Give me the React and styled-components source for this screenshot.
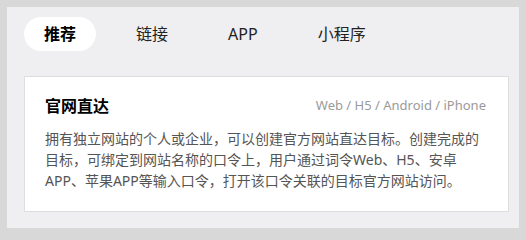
import React, { useState } from "react";
import styled, { createGlobalStyle } from "styled-components";

const GlobalStyle = createGlobalStyle`
  html, body {
    margin: 0;
    padding: 0;
    background: #d8d8d8;
  }
  body {
    padding: 7px;
    font-family: "Noto Sans", "Noto Sans CJK SC", sans-serif;
  }
`;

const Panel = styled.div`
  width: 512px;
  height: 221px;
  box-sizing: border-box;
  background: #efeff1;
  padding: 10px 10px 0 17px;
`;

const Tabs = styled.div`
  display: flex;
  gap: 20px;
  margin-bottom: 25px;
`;

const Tab = styled.button`
  border: 0;
  height: 34px;
  padding: 0 20px;
  border-radius: 17px;
  font-family: inherit;
  font-size: 16px;
  line-height: 34px;
  cursor: pointer;
  background: ${(props) => (props.active ? "#fff" : "transparent")};
  color: ${(props) => (props.active ? "#000" : "#222")};
  font-weight: ${(props) => (props.active ? 700 : 400)};
`;

const Card = styled.div`
  width: 485px;
  box-sizing: border-box;
  background: #fff;
  border: 1px solid #dedede;
  padding: 16px 20px 20px;
`;

const CardHead = styled.div`
  display: flex;
  justify-content: space-between;
  align-items: center;
  height: 24px;
  margin-bottom: 11px;
`;

const Title = styled.h3`
  margin: 0;
  font-size: 16px;
  font-weight: 700;
  color: #000;
`;

const Platforms = styled.span`
  font-size: 13px;
  color: #9a9a9a;
  margin-right: 2px;
`;

const Desc = styled.p`
  margin: 0;
  font-size: 14px;
  line-height: 21px;
  color: #555;
`;

const tabs = ["推荐", "链接", "APP", "小程序"];

export default function App() {
  const [current, setCurrent] = useState(0);
  return (
    <>
      <GlobalStyle />
      <Panel>
        <Tabs>
          {tabs.map((name, i) => (
            <Tab key={name} active={i === current} onClick={() => setCurrent(i)}>
              {name}
            </Tab>
          ))}
        </Tabs>
        <Card>
          <CardHead>
            <Title>官网直达</Title>
            <Platforms>Web / H5 / Android / iPhone</Platforms>
          </CardHead>
          <Desc>
            拥有独立网站的个人或企业，可以创建官方网站直达目标。创建完成的目标，可绑定到网站名称的口令上，用户通过词令Web、H5、安卓APP、苹果APP等输入口令，打开该口令关联的目标官方网站访问。
          </Desc>
        </Card>
      </Panel>
    </>
  );
}
